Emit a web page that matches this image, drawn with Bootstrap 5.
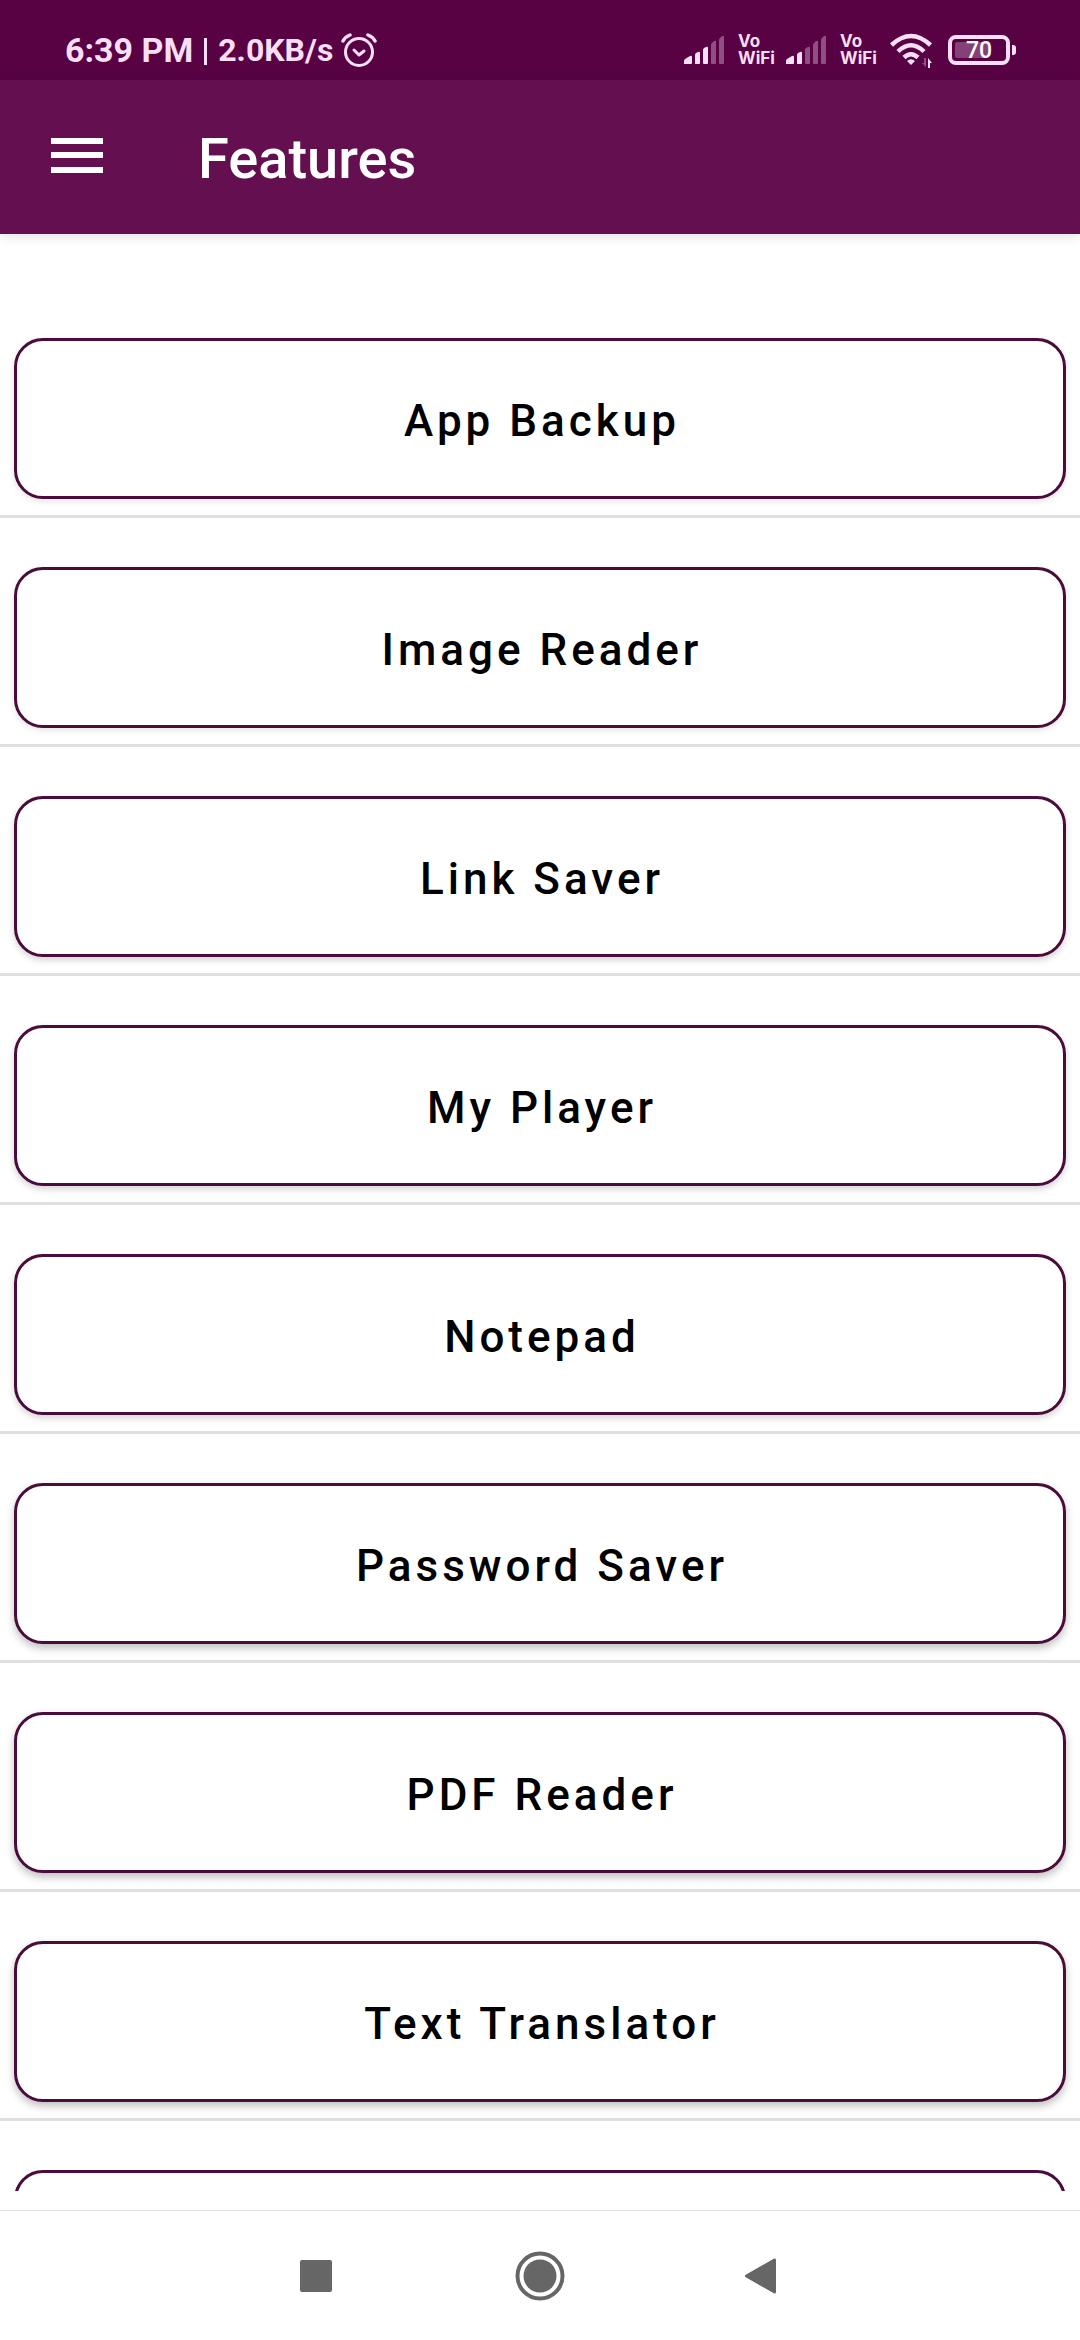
<!DOCTYPE html>
<html lang="en">
<head>
<meta charset="utf-8">
<meta name="viewport" content="width=device-width, initial-scale=1">
<title>Features</title>
<link href="https://cdn.jsdelivr.net/npm/bootstrap@5.3.0/dist/css/bootstrap.min.css" rel="stylesheet">
<style>
  body { font-family: Roboto, "Noto Sans", sans-serif; background: #fff; color: #000; }
  .status-bar { height: 80px; padding: 20px 64px 0 65px; background: #580244; color: #f8dff5; }
  .clock-text { font-size: 34px; line-height: 60px; font-weight: 700; }
  .rate-text { font-size: 32px; line-height: 60px; font-weight: 700; }
  .rate-text::before { content: ""; display: inline-block; width: 3px; height: 27px; margin: 0 11px; background: currentColor; vertical-align: -4px; }
  .status-icons { gap: 12px; height: 60px; }
  .vo-wifi { width: 36px; font: 700 17px/17px Inter, sans-serif; }
  .batt-num { font: 500 23px Roboto, sans-serif; }
  .app-bar { height: 154px; padding: 0 48px; background: #640f4f; color: #fff; box-shadow: 0 2px 12px rgba(0,0,0,.12); }
  .app-title { font-size: 56px; line-height: 64px; font-weight: 500; margin-left: 92px; padding-top: 4px; }
  .feature-list { padding-top: 55px; margin-bottom: 19px; }
  .feature-row { padding: 49px 14px 16px; border-bottom: 3px solid #e0e0e0; }
  .feature-btn { min-height: 161px; padding: 5px 0 0 4px; border: 3px solid #4a0c3a; border-radius: 29px; background: #fff; color: #000; font-size: 44px; line-height: 52px; font-weight: 500; letter-spacing: 4px; box-shadow: 0 2px 6px rgba(0,0,0,.12); }
  .feature-row:nth-child(n+3) .feature-btn { box-shadow: 0 3px 7px rgba(0,0,0,.18); }
  .feature-row:nth-child(n+6) .feature-btn { box-shadow: 0 4px 8px rgba(0,0,0,.26); }
  .feature-row:nth-child(9) .feature-btn { box-shadow: none; }
  .nav-keys { height: 130px; border-top: 1px solid #e0e0e0; background: #fff; }
  .nav-key { width: 224px; color: #666; }
</style>
<script src="https://cdn.jsdelivr.net/npm/bootstrap@5.3.0/dist/js/bootstrap.bundle.min.js"></script>
</head>
<body class="vh-100 d-flex flex-column overflow-hidden">
<svg class="d-none">
  <symbol id="sig-base" viewBox="0 0 42 30">
    <path d="M0 29v-3q0-1 1-2l5-3q2-1 2 1v6q0 1-1 1z"/>
    <path d="M11 29v-9q0-1 1-2l2-1q2-1 2 1v10q0 1-1 1z"/>
  </symbol>
</svg>

<div class="status-bar flex-shrink-0 d-flex justify-content-between">
  <div class="d-flex align-items-center">
    <span class="clock-text">6:39 PM</span>
    <span class="rate-text">2.0KB/s</span>
    <svg class="ms-2" width="36" height="36" viewBox="0 0 36 36" fill="none" stroke="currentColor" stroke-linecap="round" stroke-linejoin="round">
      <circle cx="18" cy="20" r="13.5" stroke-width="3"/>
      <path d="M13 18l5 5 5-4" stroke-width="3"/>
      <path d="M2 9Q4 5 9 3M34 9Q32 5 27 3" stroke-width="3.5"/>
    </svg>
  </div>
  <div class="status-icons d-flex align-items-center">
    <svg width="42" height="30" viewBox="0 0 42 30" fill="currentColor">
      <use href="#sig-base" width="42" height="30"/>
      <path d="M19 28V15q0-1 1-2l2-1q2-1 2 1v15q0 1-1 1h-3q-1 0-1-1z"/>
      <path opacity=".35" d="M27 28V10q0-1 1-2l2-2q2-1 2 1v21q0 1-1 1h-3q-1 0-1-1zM35 28V5q0-1 1-2l2-2q2-1 2 1v26q0 1-1 1h-3q-1 0-1-1z"/>
    </svg>
    <span class="vo-wifi">Vo<br>WiFi</span>
    <svg width="42" height="30" viewBox="0 0 42 30" fill="currentColor">
      <use href="#sig-base" width="42" height="30"/>
      <path opacity=".35" d="M19 28V15q0-1 1-2l2-1q2-1 2 1v15q0 1-1 1h-3q-1 0-1-1zM27 28V10q0-1 1-2l2-2q2-1 2 1v21q0 1-1 1h-3q-1 0-1-1zM35 28V5q0-1 1-2l2-2q2-1 2 1v26q0 1-1 1h-3q-1 0-1-1z"/>
    </svg>
    <span class="vo-wifi">Vo<br>WiFi</span>
    <svg width="46" height="36" viewBox="0 0 46 36" fill="none" stroke="currentColor" stroke-width="4.5">
      <path d="M3.500 13Q23-5 42.500 13M10 19.500Q23 7 36 19.500M16 25.500Q23 19 30 25.500"/>
      <path d="M19 29Q23 25.500 27 29L23 33z" fill="currentColor" stroke="none"/>
      <path d="M40 36V26l4 5h-2v5z" fill="currentColor" stroke="none"/>
      <path d="M38 26v9l-4-4h2v-5z" fill="currentColor" stroke="none" opacity=".35"/>
    </svg>
    <svg width="70" height="30" viewBox="0 0 70 30">
      <rect x="4" y="2" width="58" height="26" rx="6" fill="none" stroke="currentColor" stroke-width="4"/>
      <rect x="9" y="7" width="33" height="16" rx="2" fill="#854078"/>
      <path d="M66 10h1q3 0 3 3v4q0 3-3 3h-1z" fill="currentColor"/>
      <text class="batt-num" x="33" y="23" text-anchor="middle" fill="#fff">70</text>
    </svg>
  </div>
</div>

<header class="app-bar flex-shrink-0 d-flex align-items-center">
  <button type="button" class="btn p-0 border-0 d-flex text-white" aria-label="Menu">
    <svg width="58" height="38" viewBox="0 0 58 38" fill="currentColor"><path d="M3 0h52v6H3zM3 14h52v6H3zM3 29h52v6H3z"/></svg>
  </button>
  <h1 class="app-title mb-0">Features</h1>
</header>

<main class="feature-list flex-fill overflow-hidden">
  <div class="feature-row"><button type="button" class="feature-btn w-100 d-block">App Backup</button></div>
  <div class="feature-row"><button type="button" class="feature-btn w-100 d-block">Image Reader</button></div>
  <div class="feature-row"><button type="button" class="feature-btn w-100 d-block">Link Saver</button></div>
  <div class="feature-row"><button type="button" class="feature-btn w-100 d-block">My Player</button></div>
  <div class="feature-row"><button type="button" class="feature-btn w-100 d-block">Notepad</button></div>
  <div class="feature-row"><button type="button" class="feature-btn w-100 d-block">Password Saver</button></div>
  <div class="feature-row"><button type="button" class="feature-btn w-100 d-block">PDF Reader</button></div>
  <div class="feature-row"><button type="button" class="feature-btn w-100 d-block">Text Translator</button></div>
  <div class="feature-row"><button type="button" class="feature-btn w-100 d-block"></button></div>
</main>

<nav class="nav-keys flex-shrink-0 d-flex justify-content-center">
  <button type="button" class="nav-key btn border-0 p-0" aria-label="Recent apps">
    <svg width="50" height="50" viewBox="0 0 50 50" fill="currentColor"><rect x="9" y="9" width="32" height="32" rx="2"/></svg>
  </button>
  <button type="button" class="nav-key btn border-0 p-0" aria-label="Home">
    <svg width="50" height="50" viewBox="0 0 50 50" fill="currentColor"><circle cx="25" cy="25" r="16.500"/><circle cx="25" cy="25" r="22.500" fill="none" stroke="currentColor" stroke-width="4"/></svg>
  </button>
  <button type="button" class="nav-key btn border-0 p-0" aria-label="Back">
    <svg width="50" height="50" viewBox="0 0 50 50" fill="currentColor" stroke="currentColor" stroke-width="3" stroke-linejoin="round"><path d="M7.500 25L35.500 9v32z"/></svg>
  </button>
</nav>
</body>
</html>
